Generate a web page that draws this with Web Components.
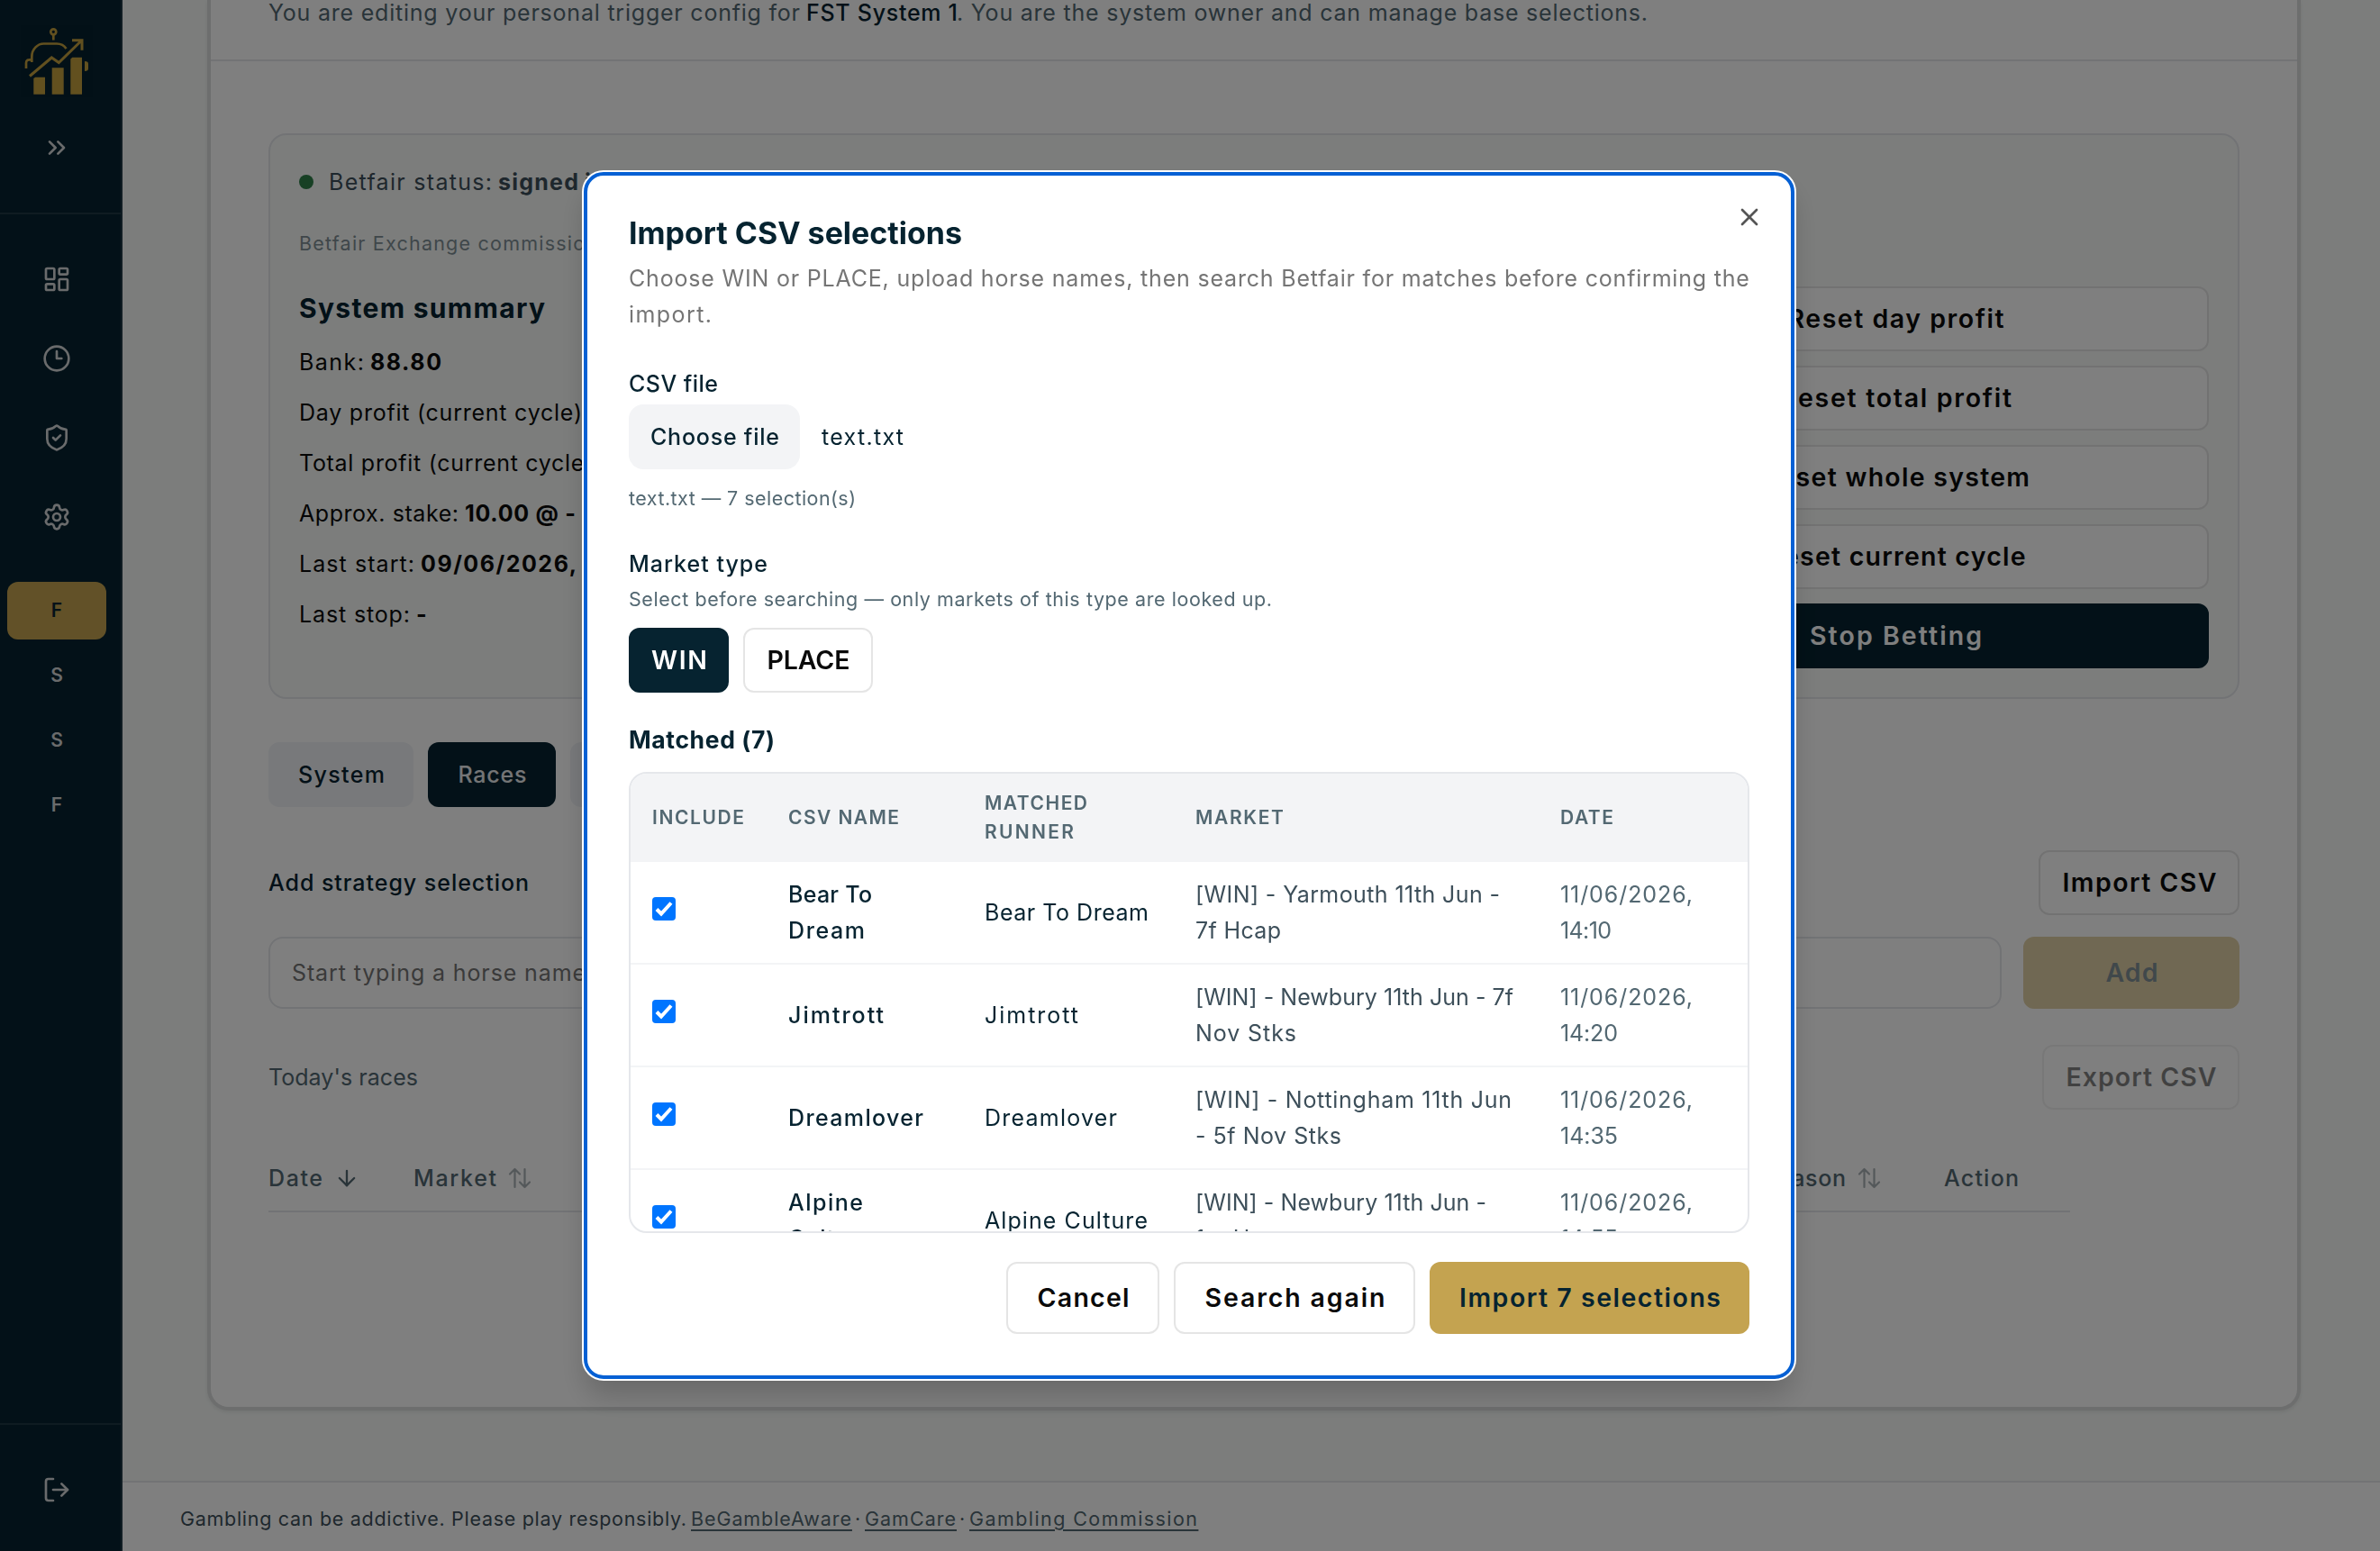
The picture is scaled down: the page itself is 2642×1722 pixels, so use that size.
<!DOCTYPE html>
<html lang="en">
<head>
<meta charset="utf-8">
<title>FST System 1</title>
<style>
  :root {
    --navy: #062330;
    --gold: #c4a350;
    --muted: #536872;
    --line: #e5e7eb;
  }
  html, body { margin: 0; height: 100%; overflow: hidden; }
  body {
    font-family: Inter, "Liberation Sans", sans-serif;
    font-size: 25px;
    line-height: 40px;
    color: #0a0a0a;
    background: #f8fbf9;
    -webkit-font-smoothing: antialiased;
  }
</style>
</head>
<body>
<app-shell></app-shell>

<script>
const icon = (body, size = 32) => `<svg width="${size}" height="${size}" viewBox="0 0 24 24" fill="none"
  stroke="currentColor" stroke-width="2" stroke-linecap="round" stroke-linejoin="round">${body}</svg>`;

const icons = {
  chevrons: icon('<path d="m6 17 5-5-5-5"/><path d="m13 17 5-5-5-5"/>'),
  dashboard: icon('<rect width="7" height="9" x="3" y="3" rx="1"/><rect width="7" height="5" x="14" y="3" rx="1"/><rect width="7" height="9" x="14" y="12" rx="1"/><rect width="7" height="5" x="3" y="16" rx="1"/>'),
  clock: icon('<circle cx="12" cy="12" r="10"/><path d="M12 6v6h4"/>'),
  shield: icon('<path d="M20 13c0 5-3.5 7.5-7.66 8.95a1 1 0 0 1-.67-.01C7.5 20.5 4 18 4 13V6a1 1 0 0 1 1-1c2 0 4.5-1.2 6.24-2.72a1.17 1.17 0 0 1 1.52 0C14.51 3.81 17 5 19 5a1 1 0 0 1 1 1z"/><path d="m9 12 2 2 4-4"/>'),
  settings: icon('<path d="M9.671 4.136a2.34 2.34 0 0 1 4.659 0 2.34 2.34 0 0 0 3.319 1.915 2.34 2.34 0 0 1 2.33 4.033 2.34 2.34 0 0 0 0 3.831 2.34 2.34 0 0 1-2.33 4.033 2.34 2.34 0 0 0-3.319 1.915 2.34 2.34 0 0 1-4.659 0 2.34 2.34 0 0 0-3.32-1.915 2.34 2.34 0 0 1-2.33-4.033 2.34 2.34 0 0 0 0-3.831A2.34 2.34 0 0 1 6.35 6.051a2.34 2.34 0 0 0 3.319-1.915"/><circle cx="12" cy="12" r="3"/>'),
  logout: icon('<path d="m16 17 5-5-5-5"/><path d="M21 12H9"/><path d="M9 21H5a2 2 0 0 1-2-2V5a2 2 0 0 1 2-2h4"/>'),
  close: icon('<path d="M18 6 6 18"/><path d="m6 6 12 12"/>'),
  down: icon('<path d="M12 5v14"/><path d="m19 12-7 7-7-7"/>', 28),
  sort: `<svg width="26" height="24" viewBox="0 0 26 24" fill="none" stroke="currentColor" stroke-width="2.2" stroke-linecap="round" stroke-linejoin="round">
    <path d="M7.5 22V2M2 7.5 7.5 2 13 7.5M18.5 2v20M13 16.5l5.500 5.500 5.500-5.500"/></svg>`,
  check: '<svg width="26" height="26" viewBox="0 0 26 26" fill="none" stroke="#fff" stroke-width="4"><path d="M5 13.500l5 5L21 6.500"/></svg>'
};

class AppShell extends HTMLElement {
  connectedCallback() {
    this.attachShadow({ mode: 'open' }).innerHTML = `
      <style>
        :host { display: flex; height: 1722px; overflow: hidden; }
        main { flex: 1; min-width: 0; display: flex; flex-direction: column; }
        .content { flex: none; height: 1644px; padding: 0 94px; box-sizing: border-box; }
      </style>
      <side-bar></side-bar>
      <main>
        <div class="content"><system-panel></system-panel></div>
        <page-footer></page-footer>
      </main>
      <modal-overlay><import-dialog></import-dialog></modal-overlay>
    `;
  }
}

class SideBar extends HTMLElement {
  connectedCallback() {
    this.attachShadow({ mode: 'open' }).innerHTML = `
      <style>
        :host {
          display: flex;
          flex: none;
          flex-direction: column;
          box-sizing: border-box;
          width: 136px;
          background: var(--navy);
          border-right: 2px solid #233b46;
          color: #d5d7d8;
        }
        svg { display: block; }
        .top { height: 236px; border-bottom: 2px solid #1f3945; }
        .top, .bottom, nav { display: flex; flex-direction: column; align-items: center; padding-right: 8px; }
        .logo { margin-top: 28px; background: #04202f; }
        .toggle { margin-top: 40px; }
        nav { flex: 1; padding-top: 56px; }
        .item { width: 110px; height: 32px; display: grid; place-items: center; margin-bottom: 56px; }
        .sys { width: 110px; height: 64px; border-radius: 12px; margin-bottom: 8px; display: grid; place-items: center; font-size: 21px; font-weight: 600; }
        .active { background: var(--gold); color: var(--navy); }
        .bottom { height: 140px; border-top: 2px solid #1f3945; }
        .bottom svg { margin-top: 56px; }
      </style>
      <div class="top">
        <svg class="logo" width="80" height="80" viewBox="0 0 80 80" fill="none" stroke="#c4a03f" stroke-width="2.700">
          <circle cx="36.300" cy="7.300" r="3"/>
          <path d="M36.300 10.500v6M12.300 41V35c0-9 7-14.500 13.200-14.500H40c4.500 0 8 1.500 10.500 5.500M12 38.500c-4-.5-6 0-6 3.500v6"/>
          <path d="M10 56.500 34.300 36l8 5.500L67 17.500M57 16.700h11v11" stroke-width="3"/>
          <path d="M71 40c3 0 4 1 4 3v5c0 2-1 3-4 3z" fill="#c4a03f" stroke="none"/>
          <path d="M14.300 59l2-1.300H27v19H14.300zM34.700 47.300h13v29.400h-13zM55.300 37.500l2-1.800H68v41H55.300z" fill="#c4a03f" stroke="none"/>
        </svg>
        <div class="toggle">${icons.chevrons}</div>
      </div>
      <nav>
        <div class="item">${icons.dashboard}</div>
        <div class="item">${icons.clock}</div>
        <div class="item">${icons.shield}</div>
        <div class="item">${icons.settings}</div>
        <div class="sys active">F</div>
        <div class="sys">S</div>
        <div class="sys">S</div>
        <div class="sys">F</div>
      </nav>
      <div class="bottom">${icons.logout}</div>
    `;
  }
}

class SystemPanel extends HTMLElement {
  connectedCallback() {
    this.attachShadow({ mode: 'open' }).innerHTML = `
      <style>
        :host {
          display: block;
          box-sizing: border-box;
          width: 2324px;
          height: 1566px;
          border: 4px solid #dbdcdd;
          border-top: 0;
          border-radius: 0 0 24px 24px;
          background: #fff;
          box-shadow: 0 2px 4px rgba(0, 0, 0, .08);
        }
        header { height: 66px; border-bottom: 2px solid var(--line); }
        header p { margin: 0; padding: 0 64px; display: flex; gap: 8px; height: 34px; align-items: flex-end; color: #536872; }
        header b { font-weight: 500; color: var(--navy); }
        .body { padding: 80px 64px 0; }
        .tabs { display: flex; gap: 16px; margin: 48px 0; }
        .tab { height: 72px; border-radius: 12px; background: #f1f3f6; color: var(--navy); font-weight: 500; display: grid; place-items: center; }
        .tab.on { background: var(--navy); color: #e8eaec; }
        .row { display: flex; justify-content: space-between; align-items: center; }
        .label { font-weight: 500; color: var(--navy); }
        .add { display: flex; gap: 24px; margin: 24px 0 40px; }
        .input { flex: 1; height: 80px; box-sizing: border-box; border: 2px solid var(--line); border-radius: 16px; padding: 18px 24px; color: #757575; }
        .today { color: #536872; }
        .thead { display: flex; align-items: center; width: 2000px; height: 75px; margin-top: 37px; padding-top: 1px; box-sizing: border-box; height: 76px; margin-top: 38px; border-bottom: 2px solid var(--line); font-weight: 500; color: #536872; }
        .thead span { display: flex; align-items: center; gap: 14px; }
        .thead svg { display: block; flex: none; }
        .dim { color: #a9b1b5; }
      </style>
      <header><p><fit-text w="589">You are editing your personal trigger config for</fit-text><b><fit-text w="167">FST System 1</fit-text></b><fit-text w="766" style="margin-left:-8px">. You are the system owner and can manage base selections.</fit-text></p></header>
      <div class="body">
        <system-summary></system-summary>
        <div class="tabs">
          <div class="tab" style="width:161px"><fit-text w="95">System</fit-text></div>
          <div class="tab on" style="width:142px"><fit-text w="75">Races</fit-text></div>
          <div class="tab" style="width:142px"></div>
        </div>
        <div class="row">
          <fit-text class="label" w="288">Add strategy selection</fit-text>
          <app-button style="width:223px"><fit-text w="170">Import CSV</fit-text></app-button>
        </div>
        <div class="add">
          <div class="input"><fit-text w="325">Start typing a horse name</fit-text></div>
          <app-button variant="gold" style="width:240px;height:80px;opacity:.5"><fit-text w="57">Add</fit-text></app-button>
        </div>
        <div class="row">
          <fit-text class="today" w="165">Today's races</fit-text>
          <app-button style="width:219px;opacity:.5"><fit-text w="166">Export CSV</fit-text></app-button>
        </div>
        <div class="thead">
          <span style="width:161px"><fit-text w="59">Date</fit-text>${icons.down}</span>
          <span style="width:1498px"><fit-text w="91">Market</fit-text><i class="dim">${icons.sort}</i></span>
          <span style="width:201px"><fit-text w="91">Reason</fit-text><i class="dim">${icons.sort}</i></span>
          <fit-text w="82">Action</fit-text>
        </div>
      </div>
    `;
  }
}

class SystemSummary extends HTMLElement {
  connectedCallback() {
    this.attachShadow({ mode: 'open' }).innerHTML = `
      <style>
        :host {
          display: block;
          box-sizing: border-box;
          height: 628px;
          padding: 32px;
          border: 2px solid var(--line);
          border-radius: 20px;
          background: #f8fbf9;
        }
        .status { display: flex; align-items: center; gap: 8px; color: #3d4f5a; }
        .status i { width: 16px; height: 16px; border-radius: 50%; background: #2f8049; margin-right: 9px; }
        .note { margin: 32px 0; font-size: 21.5px; line-height: 32px; color: #7f8e95; }
        .cols { display: grid; grid-template-columns: 1fr 696px; gap: 32px; }
        h3 { margin: 0 0 16px; font-size: 30px; line-height: 48px; font-weight: 700; color: var(--navy); }
        .line { display: flex; gap: 8px; margin-bottom: 16px; }
        b { font-weight: 700; }
        .actions { display: flex; flex-direction: column; gap: 16px; }
      </style>
      <div class="status"><i></i><fit-text w="180">Betfair status:</fit-text><b><fit-text w="88">signed</fit-text></b><b>in</b></div>
      <div class="note"><fit-text w="330">Betfair Exchange commission</fit-text></div>
      <div class="cols">
        <div>
          <h3><fit-text w="272">System summary</fit-text></h3>
          <div class="line"><fit-text w="71">Bank:</fit-text><b><fit-text w="78">88.80</fit-text></b></div>
          <div class="line"><fit-text w="313">Day profit (current cycle)</fit-text></div>
          <div class="line"><fit-text w="325">Total profit (current cycle)</fit-text></div>
          <div class="line"><fit-text w="176">Approx. stake:</fit-text><b><fit-text w="122">10.00 @ -</fit-text></b></div>
          <div class="line"><fit-text w="127">Last start:</fit-text><b><fit-text w="172">09/06/2026,</fit-text></b></div>
          <div class="line"><fit-text w="122">Last stop:</fit-text><b>-</b></div>
        </div>
        <div class="actions">
          <app-button><fit-text w="239">Reset day profit</fit-text></app-button>
          <app-button><fit-text w="256">Reset total profit</fit-text></app-button>
          <app-button><fit-text w="296">Reset whole system</fit-text></app-button>
          <app-button><fit-text w="287">Reset current cycle</fit-text></app-button>
          <app-button variant="navy"><fit-text w="190">Stop Betting</fit-text></app-button>
        </div>
      </div>
    `;
  }
}

class AppButton extends HTMLElement {
  connectedCallback() {
    this.attachShadow({ mode: 'open' }).innerHTML = `
      <style>
        :host {
          display: flex;
          align-items: center;
          justify-content: center;
          box-sizing: border-box;
          height: 72px;
          border: 2px solid #e5e5e5;
          border-radius: 12px;
          background: #fff;
          color: #0a0a0a;
          font-size: 28.5px;
          font-weight: 600;
        }
        :host([variant="navy"]) { background: var(--navy); border-color: var(--navy); color: #fff; }
        :host([variant="gold"]) { background: var(--gold); border-color: var(--gold); color: var(--navy); }
      </style>
      <slot></slot>
    `;
  }
}

class PageFooter extends HTMLElement {
  connectedCallback() {
    this.attachShadow({ mode: 'open' }).innerHTML = `
      <style>
        :host { display: flex; gap: 6px; height: 56px; padding: 20px 64px 0; border-top: 2px solid var(--line); background: #fff; font-size: 21.5px; color: #3d4f5a; }
        a { color: #536872; text-decoration: underline; text-decoration-thickness: 1.5px; text-underline-offset: 4px; }
        i { width: 4px; font-style: normal; display: flex; justify-content: center; }
      </style>
      <fit-text w="561">Gambling can be addictive. Please play responsibly.</fit-text>
      <a><fit-text w="177">BeGambleAware</fit-text></a><i>·</i><a><fit-text w="100">GamCare</fit-text></a><i>·</i><a><fit-text w="252">Gambling Commission</fit-text></a>
    `;
  }
}

class ModalOverlay extends HTMLElement {
  connectedCallback() {
    this.attachShadow({ mode: 'open' }).innerHTML = `
      <style>
        :host {
          position: fixed;
          inset: 0;
          display: grid;
          place-items: center;
          padding-right: 2px;
          background: rgba(0, 0, 0, .5);
        }
      </style>
      <slot></slot>
    `;
  }
}

class ImportDialog extends HTMLElement {
  connectedCallback() {
    this.attachShadow({ mode: 'open' }).innerHTML = `
      <style>
        :host {
          display: block;
          position: relative;
          box-sizing: border-box;
          width: 1344px;
          height: 1340px;
          padding: 44px 46px 0;
          border: 4px solid #0560d4;
          border-radius: 22px;
          background: #fff;
          box-shadow: 0 0 0 2px #fff, 0 20px 30px -2px rgba(0, 0, 0, .18);
          color: var(--navy);
        }
        .close { position: absolute; top: 30px; right: 30px; color: #555; }
        .close svg { display: block; }
        h2 { margin: 0; font-size: 34px; line-height: 40px; font-weight: 700; }
        .desc { margin: 10px 0 37px; color: #757575; }
        .desc fit-text { display: block; }
        .label { height: 40px; font-weight: 500; }
        .file { display: flex; align-items: center; gap: 24px; margin: 3px 0 16px; }
        .choose { width: 190px; height: 72px; border-radius: 16px; background: #f3f4f6; display: grid; place-items: center; font-weight: 500; }
        .hint { font-size: 21.5px; line-height: 32px; color: var(--muted); }
        .types { display: flex; gap: 16px; margin-top: 16px; }
        h3 { margin: 32px 0 16px; font-size: 26.5px; line-height: 40px; font-weight: 700; }
        .actions { display: flex; gap: 16px; justify-content: flex-end; margin-top: 32px; }
        .actions app-button { height: 80px; }
      </style>
      <div class="close">${icons.close}</div>
      <h2><fit-text w="369">Import CSV selections</fit-text></h2>
      <div class="desc">
        <fit-text w="1243">Choose WIN or PLACE, upload horse names, then search Betfair for matches before confirming the</fit-text>
        <fit-text w="91">import.</fit-text>
      </div>
      <div class="label"><fit-text w="98">CSV file</fit-text></div>
      <div class="file"><div class="choose"><fit-text w="142">Choose file</fit-text></div><fit-text w="90">text.txt</fit-text></div>
      <div class="hint"><fit-text w="251">text.txt — 7 selection(s)</fit-text></div>
      <div class="label" style="margin-top:37px"><fit-text w="153">Market type</fit-text></div>
      <div class="hint" style="margin-top:3px"><fit-text w="713">Select before searching — only markets of this type are looked up.</fit-text></div>
      <div class="types">
        <app-button variant="navy" style="width:111px"><fit-text w="61">WIN</fit-text></app-button>
        <app-button style="width:144px"><fit-text w="91">PLACE</fit-text></app-button>
      </div>
      <h3><fit-text w="161">Matched (7)</fit-text></h3>
      <match-table></match-table>
      <div class="actions">
        <app-button style="width:170px"><fit-text w="101">Cancel</fit-text></app-button>
        <app-button style="width:268px"><fit-text w="199">Search again</fit-text></app-button>
        <app-button variant="gold" style="width:355px"><fit-text w="289">Import 7 selections</fit-text></app-button>
      </div>
    `;
  }
}

// Each cell is a list of [text, width] lines.
const matches = [
  {
    csv: [['Bear To', 92], ['Dream', 84]],
    runner: [['Bear To Dream', 181]],
    market: [['[WIN] - Yarmouth 11th Jun -', 337], ['7f Hcap', 94]],
    time: ['14:10', 56]
  },
  {
    csv: [['Jimtrott', 105]],
    runner: [['Jimtrott', 103]],
    market: [['[WIN] - Newbury 11th Jun - 7f', 352], ['Nov Stks', 111]],
    time: ['14:20', 63]
  },
  {
    csv: [['Dreamlover', 149]],
    runner: [['Dreamlover', 146]],
    market: [['[WIN] - Nottingham 11th Jun', 350], ['- 5f Nov Stks', 161]],
    time: ['14:35', 63]
  },
  {
    csv: [['Alpine', 82], ['Culture', 92]],
    runner: [['Alpine Culture', 180]],
    market: [['[WIN] - Newbury 11th Jun -', 322], ['1m Hcap', 106]],
    time: ['14:55', 63]
  }
];

class MatchTable extends HTMLElement {
  connectedCallback() {
    const lines = (cell) => cell.map(([text, w]) => `<fit-text w="${w}">${text}</fit-text>`).join('');
    this.attachShadow({ mode: 'open' }).innerHTML = `
      <style>
        :host { display: block; box-sizing: border-box; height: 512px; border: 2px solid var(--line); border-radius: 20px; overflow: hidden; }
        .tr { display: grid; grid-template-columns: 151px 218px 234px 405px 232px; align-items: center; height: 112px; border-bottom: 2px solid #f3f4f6; }
        .tr > div { padding-left: 24px; display: flex; flex-direction: column; align-items: flex-start; }
        .head { height: 98px; border: 0; background: #f3f4f6; font-size: 21px; line-height: 32px; font-weight: 600; color: var(--muted); }
        .box { width: 26px; height: 26px; border-radius: 4px; background: #0075ff; margin-bottom: 8px; }
        .box svg { display: block; }
        .csv { font-weight: 500; }
        .market { color: #3d4f5a; }
        .date { color: #536872; }
      </style>
      <div class="tr head">
        <div><fit-text w="101">INCLUDE</fit-text></div>
        <div><fit-text w="122">CSV NAME</fit-text></div>
        <div><fit-text w="113">MATCHED</fit-text><fit-text w="98">RUNNER</fit-text></div>
        <div><fit-text w="97">MARKET</fit-text></div>
        <div><fit-text w="58">DATE</fit-text></div>
      </div>
      ${matches.map((m) => `
        <div class="tr">
          <div><span class="box">${icons.check}</span></div>
          <div class="csv">${lines(m.csv)}</div>
          <div>${lines(m.runner)}</div>
          <div class="market">${lines(m.market)}</div>
          <div class="date">${lines([['11/06/2026,', 146], m.time])}</div>
        </div>`).join('')}
    `;
  }
}

// Tracks its text so that the line is exactly "w" pixels wide.
class FitText extends HTMLElement {
  connectedCallback() {
    this.attachShadow({ mode: 'open' }).innerHTML = `
      <style>
        :host { display: inline-block; white-space: nowrap; flex: none; text-decoration: inherit; }
      </style>
      <slot></slot>
    `;
    const width = Number(this.getAttribute('w'));
    const range = document.createRange();
    range.selectNodeContents(this);
    const natural = range.getBoundingClientRect().width;
    const gaps = this.textContent.length - 1;
    this.style.width = width + 'px';
    this.style.letterSpacing = ((width + 1 - natural) / gaps).toFixed(3) + 'px';
  }
}

customElements.define('app-shell', AppShell);
customElements.define('side-bar', SideBar);
customElements.define('system-panel', SystemPanel);
customElements.define('system-summary', SystemSummary);
customElements.define('app-button', AppButton);
customElements.define('page-footer', PageFooter);
customElements.define('modal-overlay', ModalOverlay);
customElements.define('import-dialog', ImportDialog);
customElements.define('match-table', MatchTable);
customElements.define('fit-text', FitText);
</script>
</body>
</html>
